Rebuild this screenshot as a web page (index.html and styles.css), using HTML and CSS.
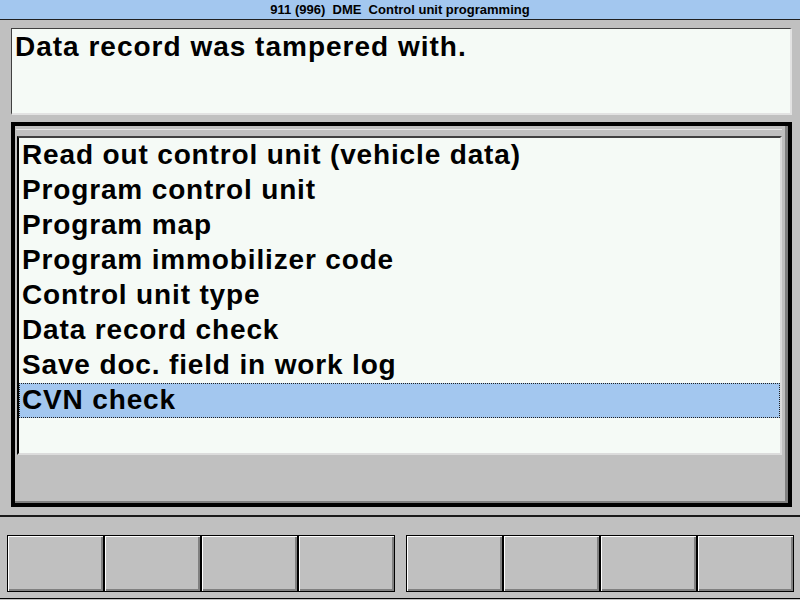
FILE: index.html
```html
<!DOCTYPE html>
<html lang="en">
<head>
<meta http-equiv="content-type" content="text/html; charset=utf-8"/>
<title>911 (996) DME Control unit programming</title>
<link rel="stylesheet" href="styles.css">
</head>

<body>

<div class="titlebar">911 (996)  DME  Control unit programming</div>

<div class="main">

<div class="message">Data record was tampered with.</div>

<div class="frame">
	<div class="pane">
		<ul class="menu">
			<li>Read out control unit (vehicle data)</li>
			<li>Program control unit</li>
			<li>Program map</li>
			<li>Program immobilizer code</li>
			<li>Control unit type</li>
			<li>Data record check</li>
			<li>Save doc. field in work log</li>
			<li class="selected">CVN check</li>
		</ul>
	</div>
</div>

</div>

<div class="toolbar">
	<div class="button_group">
		<button></button><button></button><button></button><button></button>
	</div>
	<div class="button_group">
		<button></button><button></button><button></button><button></button>
	</div>
</div>

</body>
</html>
```

FILE: styles.css
```css
html, body {
margin: 0;
padding: 0;
}

body {
width: 800px;
height: 600px;
overflow: hidden;
background-color: #c0c0c0;
font-family: "Liberation Sans", Arial, sans-serif;
color: #000000;
}


/* window title */


.titlebar {
height: 19px;
line-height: 19px;
background-color: #a3c7ef;
border-bottom: 1px solid #202020;
text-align: center;
font-size: 13px;
font-weight: bold;
white-space: pre;
}


/* message box and menu */


.main {
padding: 8px 8px 0 11px;
}

.message {
height: 84px;
padding: 0 3px 0 3px;
border-top: 1px solid #404040;
border-left: 1px solid #404040;
border-bottom: 2px solid #e2e2e2;
border-right: 2px solid #e2e2e2;
background-color: #f5faf6;
font-size: 28px;
font-weight: bold;
letter-spacing: 1px;
line-height: 35px;
}

/* thick black frame round the menu */
.frame {
margin-top: 7px;
border: 4px solid #000000;
padding-top: 3px;
box-shadow: inset -3px -2px 0 #808080;
}

.pane {
border-top: 1px solid #e4e4e4;
margin-left: 1px;
margin-right: 6px;
padding-top: 6px;
padding-bottom: 48px;
}

.menu {
list-style: none;
margin: 0 0 0 1px;
padding: 0;
height: 315px;
border-top: 2px solid #404040;
border-left: 2px solid #000000;
border-right: 2px solid #dcdcdc;
border-bottom: 2px solid #dcdcdc;
background-color: #f5faf6;
font-size: 28px;
font-weight: bold;
letter-spacing: 0.85px;
}

.menu li {
height: 35px;
line-height: 34px;
padding-left: 3px;
}

/* the highlighted entry */
.menu li.selected {
height: 33px;
line-height: 32px;
padding-left: 2px;
background-color: #a3c7ef;
border: 1px dotted #202020;
}


/* function keys */


.toolbar {
margin-top: 8px;
border-top: 2px solid #1a1a1a;
border-bottom: 1px solid #000000;
padding: 18px 0 6px 7px;
display: flex;
gap: 11px;
}

.button_group {
display: flex;
}

.button_group > button {
width: 97px;
height: 57px;
margin: 0;
padding: 0;
background-color: #c0c0c0;
border: 1px solid #000000;
box-shadow: inset 1px 1px 0 #ffffff, inset -2px -2px 0 #808080;
}
```
